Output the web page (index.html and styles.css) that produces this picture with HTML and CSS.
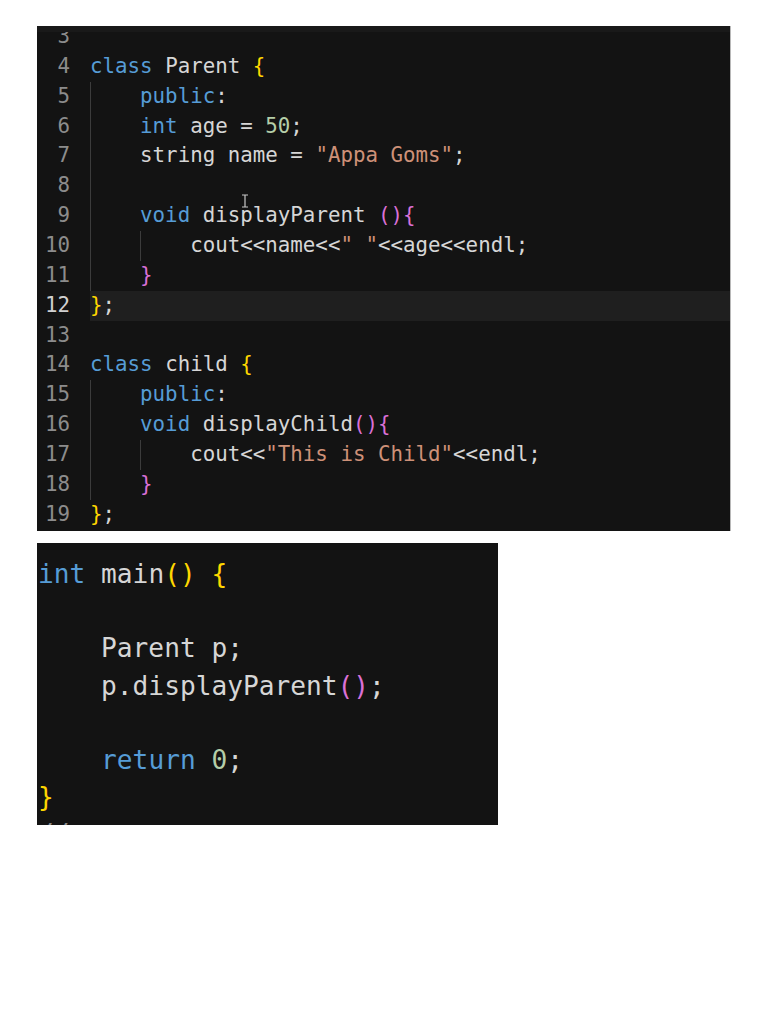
FILE: index.html
```html
<!DOCTYPE html>
<html>
<head>
<meta charset="utf-8">
<link rel="stylesheet" href="styles.css">
</head>
<body>
<div class="page">
  <section class="editor">
    <div class="lines">
      <div class="ln"><span class="num">3</span><span class="code"></span></div>
      <div class="ln"><span class="num">4</span><span class="code"><span class="kw">class</span> Parent <span class="y">{</span></span></div>
      <div class="ln"><span class="num">5</span><span class="code"><span class="ind"></span><span class="kw">public</span>:</span></div>
      <div class="ln"><span class="num">6</span><span class="code"><span class="ind"></span><span class="kw">int</span> age = <span class="n">50</span>;</span></div>
      <div class="ln"><span class="num">7</span><span class="code"><span class="ind"></span>string name = <span class="s">"Appa Goms"</span>;</span></div>
      <div class="ln"><span class="num">8</span><span class="code"><span class="ind"></span></span></div>
      <div class="ln"><span class="num">9</span><span class="code"><span class="ind"></span><span class="kw">void</span> displayParent <span class="p">(){</span></span></div>
      <div class="ln"><span class="num">10</span><span class="code"><span class="ind"></span><span class="ind"></span>cout&lt;&lt;name&lt;&lt;<span class="s">" "</span>&lt;&lt;age&lt;&lt;endl;</span></div>
      <div class="ln"><span class="num">11</span><span class="code"><span class="ind"></span><span class="p">}</span></span></div>
      <div class="ln cur"><span class="num">12</span><span class="code"><span class="y">}</span>;</span></div>
      <div class="ln"><span class="num">13</span><span class="code"></span></div>
      <div class="ln"><span class="num">14</span><span class="code"><span class="kw">class</span> child <span class="y">{</span></span></div>
      <div class="ln"><span class="num">15</span><span class="code"><span class="ind"></span><span class="kw">public</span>:</span></div>
      <div class="ln"><span class="num">16</span><span class="code"><span class="ind"></span><span class="kw">void</span> displayChild<span class="p">(){</span></span></div>
      <div class="ln"><span class="num">17</span><span class="code"><span class="ind"></span><span class="ind"></span>cout&lt;&lt;<span class="s">"This is Child"</span>&lt;&lt;endl;</span></div>
      <div class="ln"><span class="num">18</span><span class="code"><span class="ind"></span><span class="p">}</span></span></div>
      <div class="ln"><span class="num">19</span><span class="code"><span class="y">}</span>;</span></div>
    </div>
    <svg class="ibeam" width="8" height="14" viewBox="0 0 8 14"><path d="M1 1h6M4 1v12M1 13h6" stroke="#c8c8c8" stroke-width="1.2" fill="none"/></svg>
  </section>
  <section class="snippet">
    <div class="sline"><span class="kw">int</span> main<span class="y">()</span> <span class="y">{</span></div>
    <div class="sline"></div>
    <div class="sline">    Parent p;</div>
    <div class="sline">    p.displayParent<span class="p">()</span>;</div>
    <div class="sline"></div>
    <div class="sline">    <span class="kw">return</span> <span class="n">0</span>;</div>
    <div class="sline"><span class="y">}</span></div>
    <div class="sline cm">//</div>
  </section>
</div>
</body>
</html>
```
FILE: styles.css
```css
html, body {
  margin: 0;
  padding: 0;
  background: #ffffff;
}
.page {
  padding: 26px 0 0 37px;
  display: flex;
  flex-direction: column;
  align-items: flex-start;
  gap: 12px;
}
.editor {
  position: relative;
  width: 693px;
  height: 505px;
  background: #131313;
  border-right: 1px solid #b8b8b8;
  overflow: hidden;
  font-family: "DejaVu Sans Mono", monospace;
  font-size: 20.8px;
  color: #d6d6d6;
}
.editor::before {
  content: "";
  position: absolute;
  left: 0;
  right: 0;
  top: 0;
  height: 6px;
  background: #191919;
  z-index: 1;
}
.lines {
  margin-top: -4px;
  display: flex;
  flex-direction: column;
}
.ln {
  display: flex;
  gap: 20px;
  height: 29.87px;
  line-height: 29.87px;
  white-space: pre;
}
.num {
  width: 33px;
  flex: none;
  text-align: right;
  color: #8c8c8c;
}
.code {
  flex: 1;
}
.cur .num {
  color: #d0d0d0;
}
.cur .code {
  background: #1f1f1f;
}
.ind {
  display: inline-block;
  width: 4ch;
  height: 29.87px;
  vertical-align: top;
  box-shadow: inset 1px 0 0 #3c3c3c;
}
.kw { color: #569cd6; }
.s { color: #ce9178; }
.n { color: #b5cea8; }
.y { color: #ffd700; }
.p { color: #da70d6; }
.ibeam {
  position: absolute;
  left: 204px;
  top: 168px;
}
.snippet {
  width: 461px;
  height: 282px;
  padding: 13px 0 0 1px;
  box-sizing: border-box;
  background: #131313;
  overflow: hidden;
  font-family: "DejaVu Sans Mono", monospace;
  font-size: 26.2px;
  color: #d6d6d6;
}
.sline {
  height: 37.2px;
  line-height: 37.2px;
  white-space: pre;
}
.cm {
  color: #8a8a8a;
}
```
